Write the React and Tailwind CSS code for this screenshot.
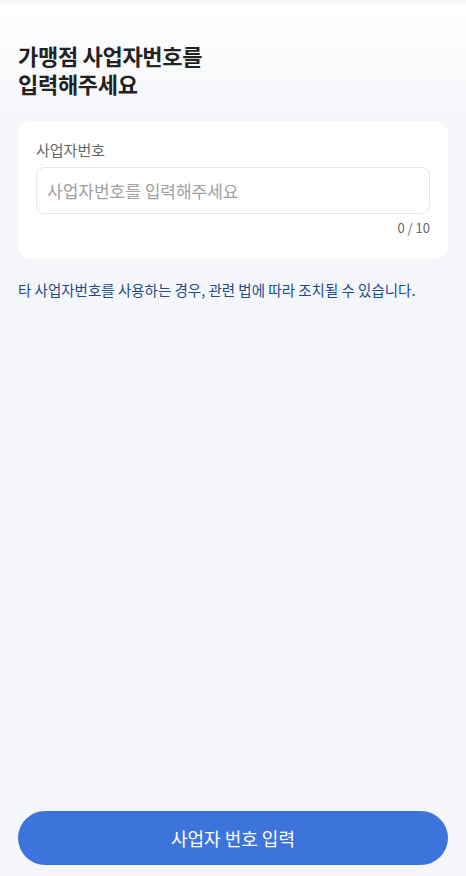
import { useState } from 'react';

export default function App() {
  const [value, setValue] = useState('');

  return (
    <div
      className="flex flex-col min-h-[876px] h-[876px] bg-gradient-to-b from-white from-[0%] to-[#f5f6fa] to-[14%] text-[#222]"
      style={{ fontFamily: '"Noto Sans CJK KR", "Noto Sans", sans-serif' }}
    >
      {/* top shadow strip */}
      <div className="h-[6px] bg-gradient-to-b from-[#f0f0f0] to-white/0" />

      <div className="flex-1 px-[18px]">
        <h1 className="mt-[35px] text-[22px] font-bold leading-[28px] tracking-[-0.3px] text-[#222]">
          가맹점 사업자번호를<br />입력해주세요
        </h1>

        <div className="mt-[24px] bg-white rounded-[14px] px-[18px] pt-[19px] pb-[22px]">
          <label className="block text-[15px] leading-[20px] text-[#666]">사업자번호</label>
          <input
            className="mt-[7px] w-full h-[47px] border border-[#e6e6e6] rounded-[8px] px-[10px] text-[17px] text-[#222] placeholder:text-[#a0a0a0] outline-none"
            placeholder="사업자번호를 입력해주세요"
            value={value}
            maxLength={10}
            onChange={e => setValue(e.target.value)}
          />
          <p className="mt-[5px] text-right text-[13px] leading-[18px] text-[#666]">{value.length} / 10</p>
        </div>

        <p className="mt-[21px] text-[14.5px] leading-[20px] text-[#1e4a8c]">
          타 사업자번호를 사용하는 경우, 관련 법에 따라 조치될 수 있습니다.
        </p>
      </div>

      <div className="px-[18px] pb-[11px]">
        <button className="w-full h-[54px] rounded-full bg-[#3d74dc] text-white text-[18px]">
          사업자 번호 입력
        </button>
      </div>
    </div>
  );
}
